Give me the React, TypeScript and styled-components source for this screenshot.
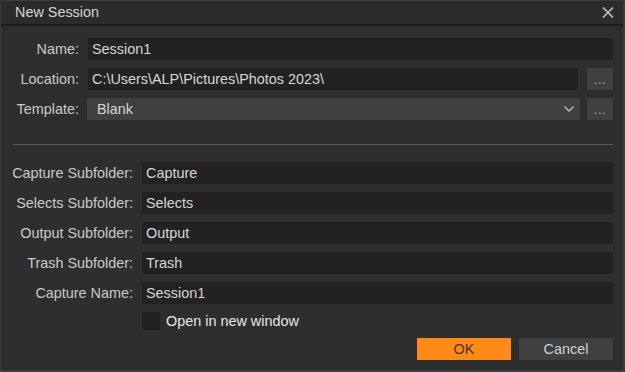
import { Fragment } from "react"
import styled, { createGlobalStyle } from "styled-components"

const GlobalStyle = createGlobalStyle`
    html, body {
        margin: 0;
        padding: 0;
        background: #2d2d2d;
    }
    * {
        box-sizing: border-box;
    }
`

const Window = styled.div`
    width: 625px;
    height: 372px;
    background-color: #2e2e2e;
    border: 1px solid #3c3c3c;
    border-right-width: 2px;
    border-bottom-width: 2px;
    font-family: "Liberation Sans", Arial, sans-serif;
    font-size: 14.4px;
    color: #cfcfcf;
    display: flex;
    flex-direction: column;
`

const TitleBar = styled.div`
    height: 25px;
    background-color: #2b2b2b;
    border-bottom: 2px solid #1c1c1c;
    display: flex;
    align-items: center;
    justify-content: space-between;
    padding: 0 8px 1px 14px;
    color: #d4d4d4;
`

const CloseButton = styled.div`
    width: 14px;
    height: 14px;
    display: flex;
    align-items: center;
    justify-content: center;
`

const Body = styled.div`
    padding: 12px 10px 0 0;
    display: flex;
    flex-direction: column;
`

const Grid = styled.div<{ $label: number }>`
    display: grid;
    grid-template-columns: ${p => p.$label}px 1fr auto;
    column-gap: 9px;
    row-gap: 8px;
    align-items: center;
`

const Label = styled.div`
    text-align: right;
    color: #c9c9c9;
    white-space: nowrap;
`

const Field = styled.div<{ $wide?: boolean }>`
    height: 22px;
    background-color: #222222;
    padding-left: 4px;
    display: flex;
    align-items: center;
    color: #d6d6d6;
    white-space: nowrap;
    grid-column: ${p => (p.$wide ? "2 / 4" : "2 / 3")};
`

const Select = styled.div`
    height: 22px;
    margin: 0 -2px 0 -1px;
    background-color: #404040;
    padding: 0 6px 0 10px;
    display: flex;
    align-items: center;
    justify-content: space-between;
    color: #d6d6d6;
`

const Browse = styled.div`
    width: 26px;
    height: 22px;
    background-color: #404040;
    color: #a8b4c0;
    font-size: 13px;
    letter-spacing: 0.5px;
    display: flex;
    align-items: flex-end;
    justify-content: center;
    padding-bottom: 4px;
    line-height: 1;
`

const Separator = styled.hr`
    margin: 24px 0 17px 12px;
    border: none;
    height: 1px;
    background-color: #5a5a5a;
`

const CheckRow = styled.div`
    grid-column: 2 / 4;
    display: flex;
    align-items: center;
    gap: 6px;
    color: #e6e6e6;
    height: 18px;
`

const CheckBox = styled.div`
    width: 18px;
    height: 18px;
    background-color: #222222;
`

const Buttons = styled.div`
    display: flex;
    justify-content: flex-end;
    gap: 8px;
    margin-top: 8px;
`

const Button = styled.div<{ $primary?: boolean }>`
    width: 94px;
    height: 22px;
    display: flex;
    align-items: center;
    justify-content: center;
    background-color: ${p => (p.$primary ? "#ff8a17" : "#404040")};
    color: ${p => (p.$primary ? "#4a3320" : "#cdd3d8")};
`

const bottomRows = [
    ["Capture Subfolder:", "Capture"],
    ["Selects Subfolder:", "Selects"],
    ["Output Subfolder:", "Output"],
    ["Trash Subfolder:", "Trash"],
    ["Capture Name:", "Session1"],
]

export default function App() {
    return (
        <>
            <GlobalStyle />
            <Window>
                <TitleBar>
                    <span>New Session</span>
                    <CloseButton>
                        <svg width="12" height="11" viewBox="0 0 12 11">
                            <path d="M1 0.5 L11 10.5 M11 0.5 L1 10.5" stroke="#c4c4c4" strokeWidth="1.6" fill="none" />
                        </svg>
                    </CloseButton>
                </TitleBar>
                <Body>
                    <Grid $label={78}>
                        <Label>Name:</Label>
                        <Field $wide>Session1</Field>
                        <Label>Location:</Label>
                        <Field>C:\Users\ALP\Pictures\Photos 2023\</Field>
                        <Browse>...</Browse>
                        <Label>Template:</Label>
                        <Select>
                            <span>Blank</span>
                            <svg width="10" height="6" viewBox="0 0 10 6">
                                <polyline points="0.5,0.5 5,5 9.5,0.5" stroke="#c0c0c0" strokeWidth="1.3" fill="none" />
                            </svg>
                        </Select>
                        <Browse>...</Browse>
                    </Grid>
                    <Separator />
                    <Grid $label={132}>
                        {bottomRows.map(([label, value]) => (
                            <Fragment key={label}>
                                <Label>{label}</Label>
                                <Field $wide>{value}</Field>
                            </Fragment>
                        ))}
                        <CheckRow>
                            <CheckBox />
                            <span>Open in new window</span>
                        </CheckRow>
                    </Grid>
                    <Buttons>
                        <Button $primary>OK</Button>
                        <Button>Cancel</Button>
                    </Buttons>
                </Body>
            </Window>
        </>
    )
}
